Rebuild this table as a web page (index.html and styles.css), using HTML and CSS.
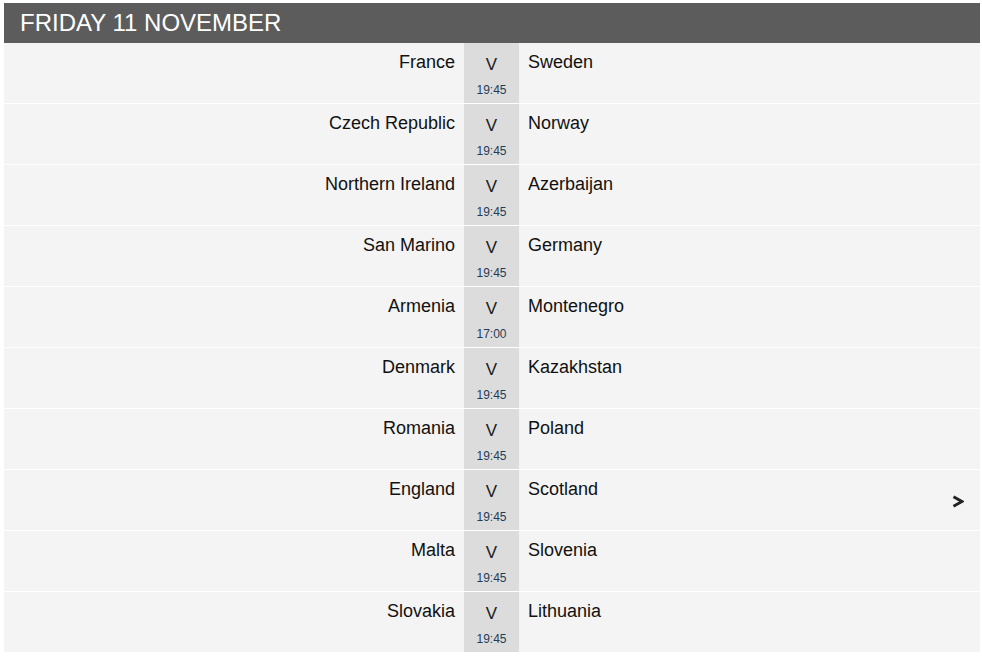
FILE: index.html
```html
<!DOCTYPE html>
<html>
<head>
<meta charset="utf-8">
<link rel="stylesheet" href="styles.css">
</head>
<body>
<div class="fixtures">
  <div class="day-header">FRIDAY 11 NOVEMBER</div>
  <div class="match"><div class="home">France</div><div class="vs"><span class="v">V</span><span class="time">19:45</span></div><div class="away">Sweden</div></div>
  <div class="match"><div class="home">Czech Republic</div><div class="vs"><span class="v">V</span><span class="time">19:45</span></div><div class="away">Norway</div></div>
  <div class="match"><div class="home">Northern Ireland</div><div class="vs"><span class="v">V</span><span class="time">19:45</span></div><div class="away">Azerbaijan</div></div>
  <div class="match"><div class="home">San Marino</div><div class="vs"><span class="v">V</span><span class="time">19:45</span></div><div class="away">Germany</div></div>
  <div class="match"><div class="home">Armenia</div><div class="vs"><span class="v">V</span><span class="time">17:00</span></div><div class="away">Montenegro</div></div>
  <div class="match"><div class="home">Denmark</div><div class="vs"><span class="v">V</span><span class="time">19:45</span></div><div class="away">Kazakhstan</div></div>
  <div class="match"><div class="home">Romania</div><div class="vs"><span class="v">V</span><span class="time">19:45</span></div><div class="away">Poland</div></div>
  <div class="match"><div class="home">England</div><div class="vs"><span class="v">V</span><span class="time">19:45</span></div><div class="away">Scotland</div>
    <svg class="chevron" width="12" height="13" viewBox="0 0 12 13"><path d="M1.5 1.8 L10 6.5 L1.5 11.2" fill="none" stroke="#222" stroke-width="3" stroke-linejoin="miter"/></svg>
  </div>
  <div class="match"><div class="home">Malta</div><div class="vs"><span class="v">V</span><span class="time">19:45</span></div><div class="away">Slovenia</div></div>
  <div class="match"><div class="home">Slovakia</div><div class="vs"><span class="v">V</span><span class="time">19:45</span></div><div class="away">Lithuania</div></div>
</div>
</body>
</html>
```
FILE: styles.css
```css
html, body {
  margin: 0;
  padding: 0;
  background: #ffffff;
}
body {
  padding: 3px 2px 0 4px;
  font-family: "Liberation Sans", Arial, sans-serif;
}
.fixtures {
  width: 976px;
}
.day-header {
  height: 40px;
  background: #5c5c5c;
  color: #ffffff;
  font-size: 24px;
  line-height: 40px;
  padding-left: 16px;
}
.match {
  position: relative;
  display: grid;
  grid-template-columns: 460px 55px 1fr;
  height: 60px;
  background: #f4f4f4;
  border-bottom: 1px solid #ffffff;
}
.home, .away {
  font-size: 18px;
  line-height: 20px;
  padding-top: 9px;
  color: #111111;
}
.home {
  text-align: right;
  padding-right: 9px;
}
.away {
  padding-left: 9px;
}
.vs {
  background: #dcdcdc;
  display: flex;
  flex-direction: column;
  align-items: center;
  padding-top: 12px;
}
.v {
  font-size: 17px;
  line-height: 20px;
  color: #1a1a1a;
}
.time {
  margin-top: 8px;
  font-size: 12px;
  line-height: 14px;
  color: #1f3c58;
}
.chevron {
  position: absolute;
  right: 16px;
  top: 25px;
}
```
